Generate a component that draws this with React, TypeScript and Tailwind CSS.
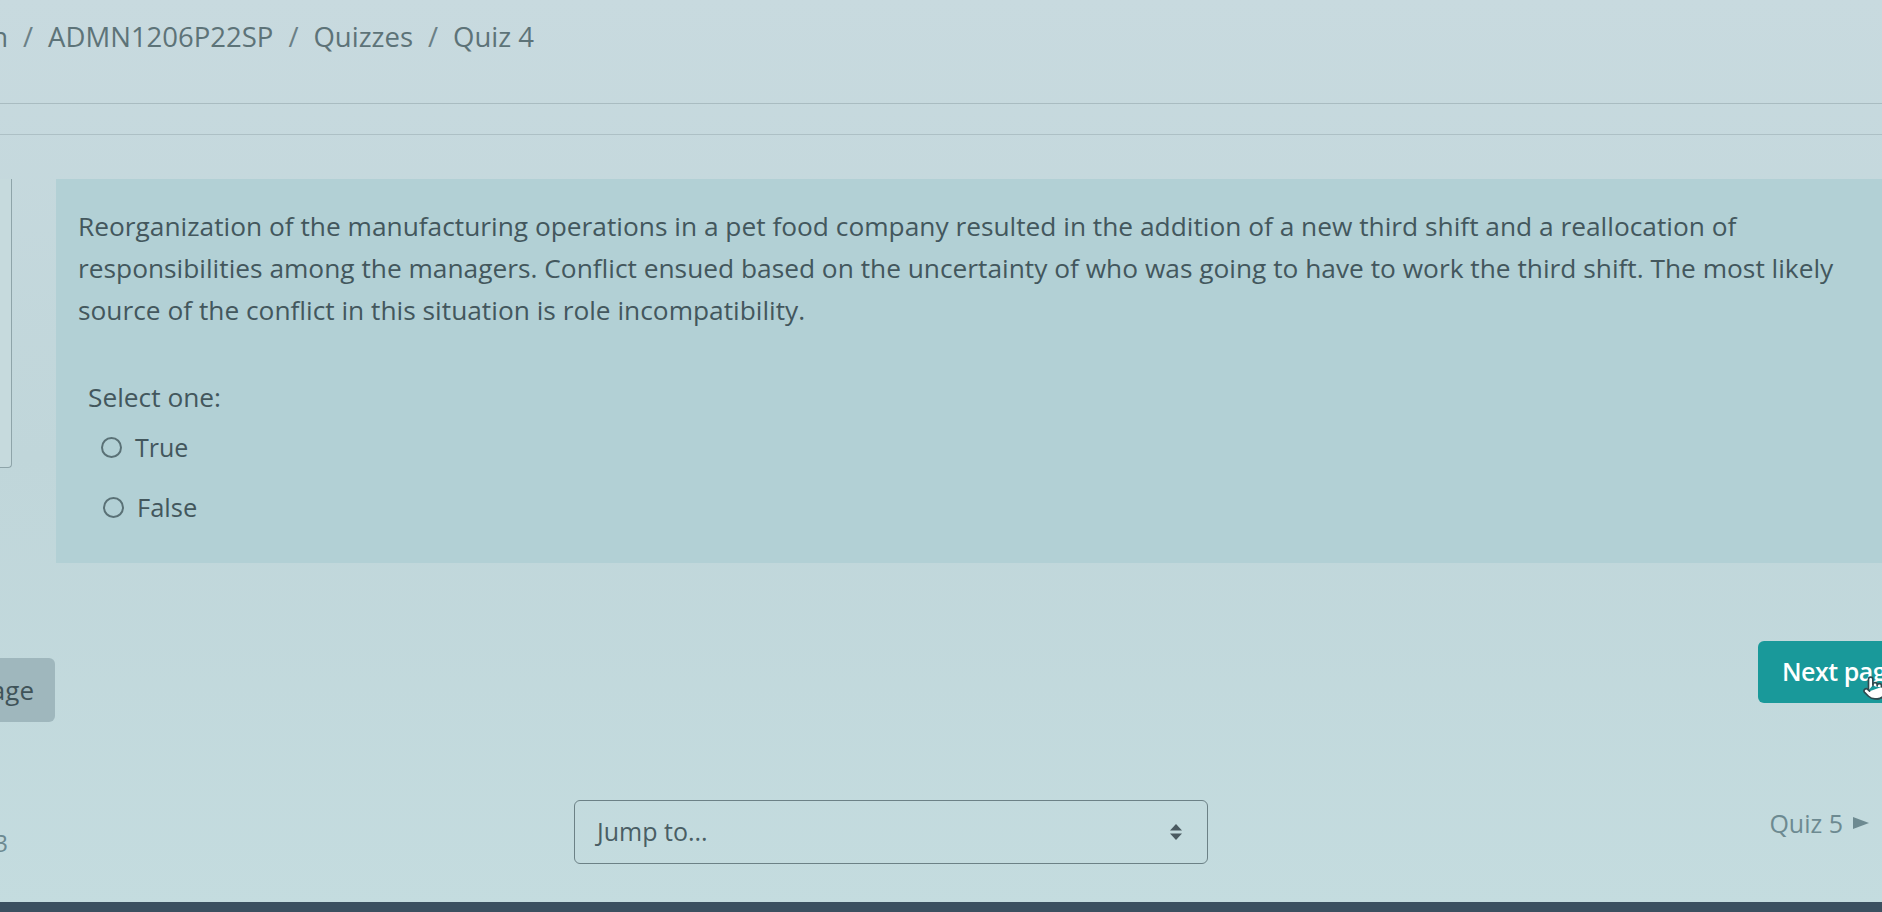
import React from "react";
import { Pointer } from "lucide-react";

const font = { fontFamily: '"Open Sans", "Liberation Sans", sans-serif' };

function Crumbs() {
  const sep = <span className="px-[15px] text-[#6b8086]">/</span>;
  return (
    <nav className="flex items-start pt-[17px] text-[27.5px] leading-[40px] text-[#5d7378] whitespace-nowrap">
      <div className="w-[8px] overflow-hidden flex justify-end shrink-0">
        <span>Admin</span>
      </div>
      {sep}
      <span>ADMN1206P22SP</span>
      {sep}
      <span>Quizzes</span>
      {sep}
      <span>Quiz 4</span>
    </nav>
  );
}

function Radio({ label, className }: { label: string; className: string }) {
  return (
    <label className={`flex items-center gap-[13px] ${className}`}>
      <span className="w-[21px] h-[21px] rounded-full border-[2.5px] border-[#5a7176] shrink-0" />
      <span>{label}</span>
    </label>
  );
}

export default function App() {
  return (
    <div
      style={font}
      className="relative w-[1882px] h-[912px] overflow-hidden flex flex-col bg-gradient-to-b from-[#c8dadf] via-[#c0d6da] to-[#c4dcdf] text-[#43575d]"
    >
      <Crumbs />

      <div className="mt-[46px] h-px bg-[#a9bcc1]" />
      <div className="mt-[30px] h-px bg-[#adc0c5]" />

      <div className="relative mt-[44px] flex">
        {/* left drawer edge */}
        <div className="absolute left-0 top-[0px] w-[12px] h-[289px] bg-[#c6dadd] border-r border-b border-[#8ea4a9] rounded-br-[4px]" />
        <section className="ml-[56px] flex-1 h-[384px] bg-[#b2d0d5] pl-[22px] pt-[26px] text-[26.3px]">
          <div className="leading-[42px] whitespace-nowrap">
            <div>
              Reorganization of the manufacturing operations in a pet food company resulted in the addition of a new third shift and a reallocation of
            </div>
            <div>
              responsibilities among the managers. Conflict ensued based on the uncertainty of who was going to have to work the third shift. The most likely
            </div>
            <div>source of the conflict in this situation is role incompatibility.</div>
          </div>

          <div className="mt-[48px] ml-[10px] leading-[36px]">Select one:</div>
          <Radio label="True" className="mt-[14px] ml-[23px] leading-[36px] text-[25px]" />
          <Radio label="False" className="mt-[24px] ml-[25px] leading-[36px] text-[25.5px]" />
        </section>
      </div>

      <div className="flex justify-between items-start">
        <div className="mt-[95px] w-[55px] overflow-hidden flex justify-end shrink-0">
          <button className="h-[64px] pl-[24px] pr-[21px] rounded-[6px] bg-[#9fb7bd] text-[26px] text-[#3f5359] whitespace-nowrap">
            Previous page
          </button>
        </div>
        <div className="relative mt-[78px] w-[124px] shrink-0">
          <button className="h-[62px] pl-[24px] pr-[24px] rounded-[6px] bg-[#19999a] text-[25px] font-semibold tracking-[-0.5px] text-white whitespace-nowrap">
            Next page
          </button>
          <Pointer
            className="absolute left-[104px] top-[34px]"
            size={26}
            fill="#ffffff"
            stroke="#2f4a4f"
            strokeWidth={1.5}
          />
        </div>
      </div>

      <div className="mt-[78px] flex items-start text-[24px]">
        <div className="mt-[25px] w-[8px] overflow-hidden flex justify-end shrink-0 leading-[36px] text-[#6d8a91] whitespace-nowrap">
          <span>◄ Quiz 3</span>
        </div>
        <div className="ml-[566px] w-[634px] h-[64px] border-[1.5px] border-[#6c8186] rounded-[6px] flex items-center justify-between pl-[22px] pr-[24px] text-[25px] text-[#4a5e64]">
          <span>Jump to...</span>
          <svg width="14" height="18" viewBox="0 0 14 18">
            <path d="M7 1 L13 7.5 H1 Z" fill="#4a5a60" />
            <path d="M7 17 L13 10.5 H1 Z" fill="#4a5a60" />
          </svg>
        </div>
        <div className="ml-auto mr-[13px] mt-[5px] flex items-center gap-[10px] text-[25px] leading-[36px] text-[#6d8a91]">
          <span>Quiz 5</span>
          <svg width="16" height="12" viewBox="0 0 16 12">
            <path d="M0 0 L16 6 L0 12 Z" fill="#6d8a91" />
          </svg>
        </div>
      </div>

      <div className="mt-auto h-[10px] bg-[#3b5060]" />
    </div>
  );
}
